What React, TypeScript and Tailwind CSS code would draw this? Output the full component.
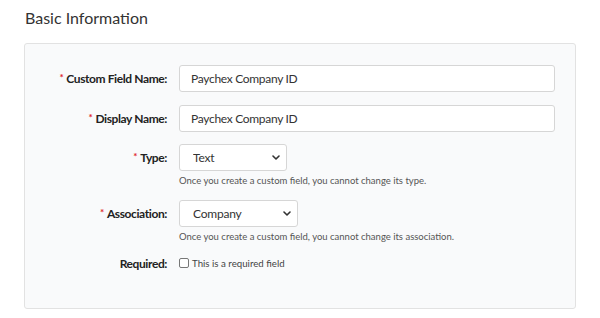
import { ReactNode } from "react";

const font = { fontFamily: "Lato, 'Open Sans', sans-serif" };

const Label = ({ text, required }: { text: string; required?: boolean }) => (
  <div className="h-[27px] w-[142px] shrink-0 overflow-visible text-right text-[12px] font-bold leading-[27px] tracking-[-0.4px] text-[#222]">
    {required && <span className="mr-[3px] align-[2px] text-[10px] leading-none text-[#e0262b]">*</span>}
    {text}
  </div>
);

const Row = ({ label, required, children }: { label: string; required?: boolean; children: ReactNode }) => (
  <div className="flex items-start">
    <Label text={label} required={required} />
    <div className="ml-3 flex-1">{children}</div>
  </div>
);

const Chevron = () => (
  <svg className="pointer-events-none absolute right-[7px] top-[11px] h-[5px] w-[8px]" viewBox="0 0 8 5" fill="none">
    <path d="M1 1l3 3 3-3" stroke="#333" strokeWidth="1.6" strokeLinecap="round" strokeLinejoin="round" />
  </svg>
);

const Select = ({ value, width }: { value: string; width: string }) => (
  <div className={`relative h-[27px] ${width}`}>
    <select
      defaultValue={value}
      className="block h-[27px] w-full appearance-none rounded-[3px] border border-[#d6d6d6] bg-white pl-[13px] text-[12px] tracking-[-0.2px] text-[#333] outline-none"
      style={font}
    >
      <option>{value}</option>
    </select>
    <Chevron />
  </div>
);

const Help = ({ text }: { text: string }) => (
  <p className="mt-[3px] text-[9.5px] leading-[14px] text-[#555]">{text}</p>
);

export default function App() {
  return (
    <div className="h-[318px] w-[600px] overflow-hidden bg-white" style={font}>
      <h2 className="px-[25px] pt-[7px] text-[16px] leading-[22px] text-[#333]">Basic Information</h2>
      <div className="mx-[24px] mt-[14px] flex h-[266px] flex-col gap-[13px] rounded-[3px] border border-[#e2e2e2] bg-[#f9fafb] pr-[20px] pt-[21px]">
        <Row label="Custom Field Name:" required>
          <input
            defaultValue="Paychex Company ID"
            className="block h-[27px] w-full rounded-[3px] border border-[#d6d6d6] bg-white px-[11px] text-[12px] tracking-[-0.3px] text-[#333] outline-none"
            style={font}
          />
        </Row>
        <Row label="Display Name:" required>
          <input
            defaultValue="Paychex Company ID"
            className="block h-[27px] w-full rounded-[3px] border border-[#d6d6d6] bg-white px-[11px] text-[12px] tracking-[-0.3px] text-[#333] outline-none"
            style={font}
          />
        </Row>
        <div className="-mt-px">
          <Row label="Type:" required>
            <Select value="Text" width="w-[108px]" />
            <Help text="Once you create a custom field, you cannot change its type." />
          </Row>
        </div>
        <div className="-mt-px">
          <Row label="Association:" required>
            <Select value="Company" width="w-[119px]" />
            <Help text="Once you create a custom field, you cannot change its association." />
          </Row>
        </div>
        <div className="-mt-[7px] flex items-center">
          <Label text="Required:" />
          <label className="ml-3 flex items-center gap-[3px] text-[9.7px] text-[#444]">
            <span className="inline-block h-[10px] w-[10px] rounded-[2px] border border-[#777] bg-white" />
            This is a required field
          </label>
        </div>
      </div>
    </div>
  );
}
